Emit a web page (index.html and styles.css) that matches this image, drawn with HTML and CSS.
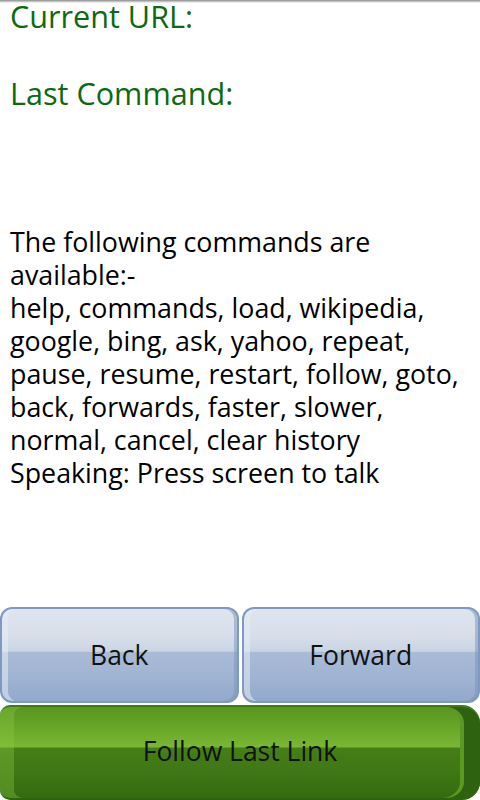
FILE: index.html
```html
<!DOCTYPE html>
<html>
<head>
<meta charset="utf-8">
<link rel="stylesheet" href="styles.css">
</head>
<body>
<div class="screen">
  <div class="topshade"></div>
  <div class="content">
    <div class="label">Current URL:</div>
    <div class="value url"></div>
    <div class="label">Last Command:</div>
    <div class="info">The following commands are available:-<br>help, commands, load, wikipedia, google, bing, ask, yahoo, repeat, pause, resume, restart, follow, goto, back, forwards, faster, slower, normal, cancel, clear history<br>Speaking: Press screen to talk</div>
  </div>
  <div class="buttons">
    <div class="row">
      <div class="btn blue">Back</div>
      <div class="btn blue">Forward</div>
    </div>
    <div class="btn green">Follow Last Link</div>
  </div>
</div>
</body>
</html>
```
FILE: styles.css
```css
html, body {
  margin: 0;
  padding: 0;
  background: #ffffff;
}
.screen {
  position: relative;
  width: 480px;
  height: 800px;
  display: flex;
  flex-direction: column;
  font-family: "Open Sans", "DejaVu Sans", sans-serif;
  overflow: hidden;
}
.topshade {
  position: absolute;
  top: 0;
  left: 0;
  right: 0;
  height: 3px;
  background: linear-gradient(to bottom, #8a8a8a, #d0d0d0 60%, rgba(255,255,255,0));
}
.content {
  flex: 1;
  padding: 0 10px;
}
.label {
  font-size: 30.6px;
  line-height: 33px;
  color: #0d6a10;
}
.value.url {
  height: 44px;
}
.info {
  margin-top: 115px;
  font-size: 26.8px;
  line-height: 33px;
  color: #000000;
}
.buttons {
  display: flex;
  flex-direction: column;
  gap: 2px;
}
.row {
  display: flex;
  gap: 3px;
}
.btn {
  box-sizing: border-box;
  display: flex;
  align-items: center;
  justify-content: center;
  font-size: 26.5px;
  color: #111111;
}
.blue {
  flex: 1;
  height: 96px;
  border: 2px solid #7f99c2;
  border-radius: 12px;
  background: linear-gradient(to bottom, #dfe5ee 0%, #d7dee9 30%, #c9d4e4 46%, #aabbd6 47%, #9fb3d2 75%, #93a9cc 100%);
  box-shadow: inset 7px 0 0 -1px rgba(230,236,245,0.55), inset -3px 0 0 0 rgba(120,145,185,0.5);
}
.green {
  height: 95px;
  padding-bottom: 3px;
  border-radius: 10px 18px 18px 10px;
  border-top: 2px solid #3f7a1a;
  border-bottom: 2px solid #2f6210;
  background: linear-gradient(to bottom, #58961f 0%, #6aa829 25%, #7ab733 44%, #467f17 45%, #3d7614 75%, #346b10 100%);
  box-shadow: inset -16px 0 0 0 #2e6210, inset -20px 0 0 0 #5a9a22, inset 14px 0 0 0 rgba(140,200,70,0.35);
}
```
